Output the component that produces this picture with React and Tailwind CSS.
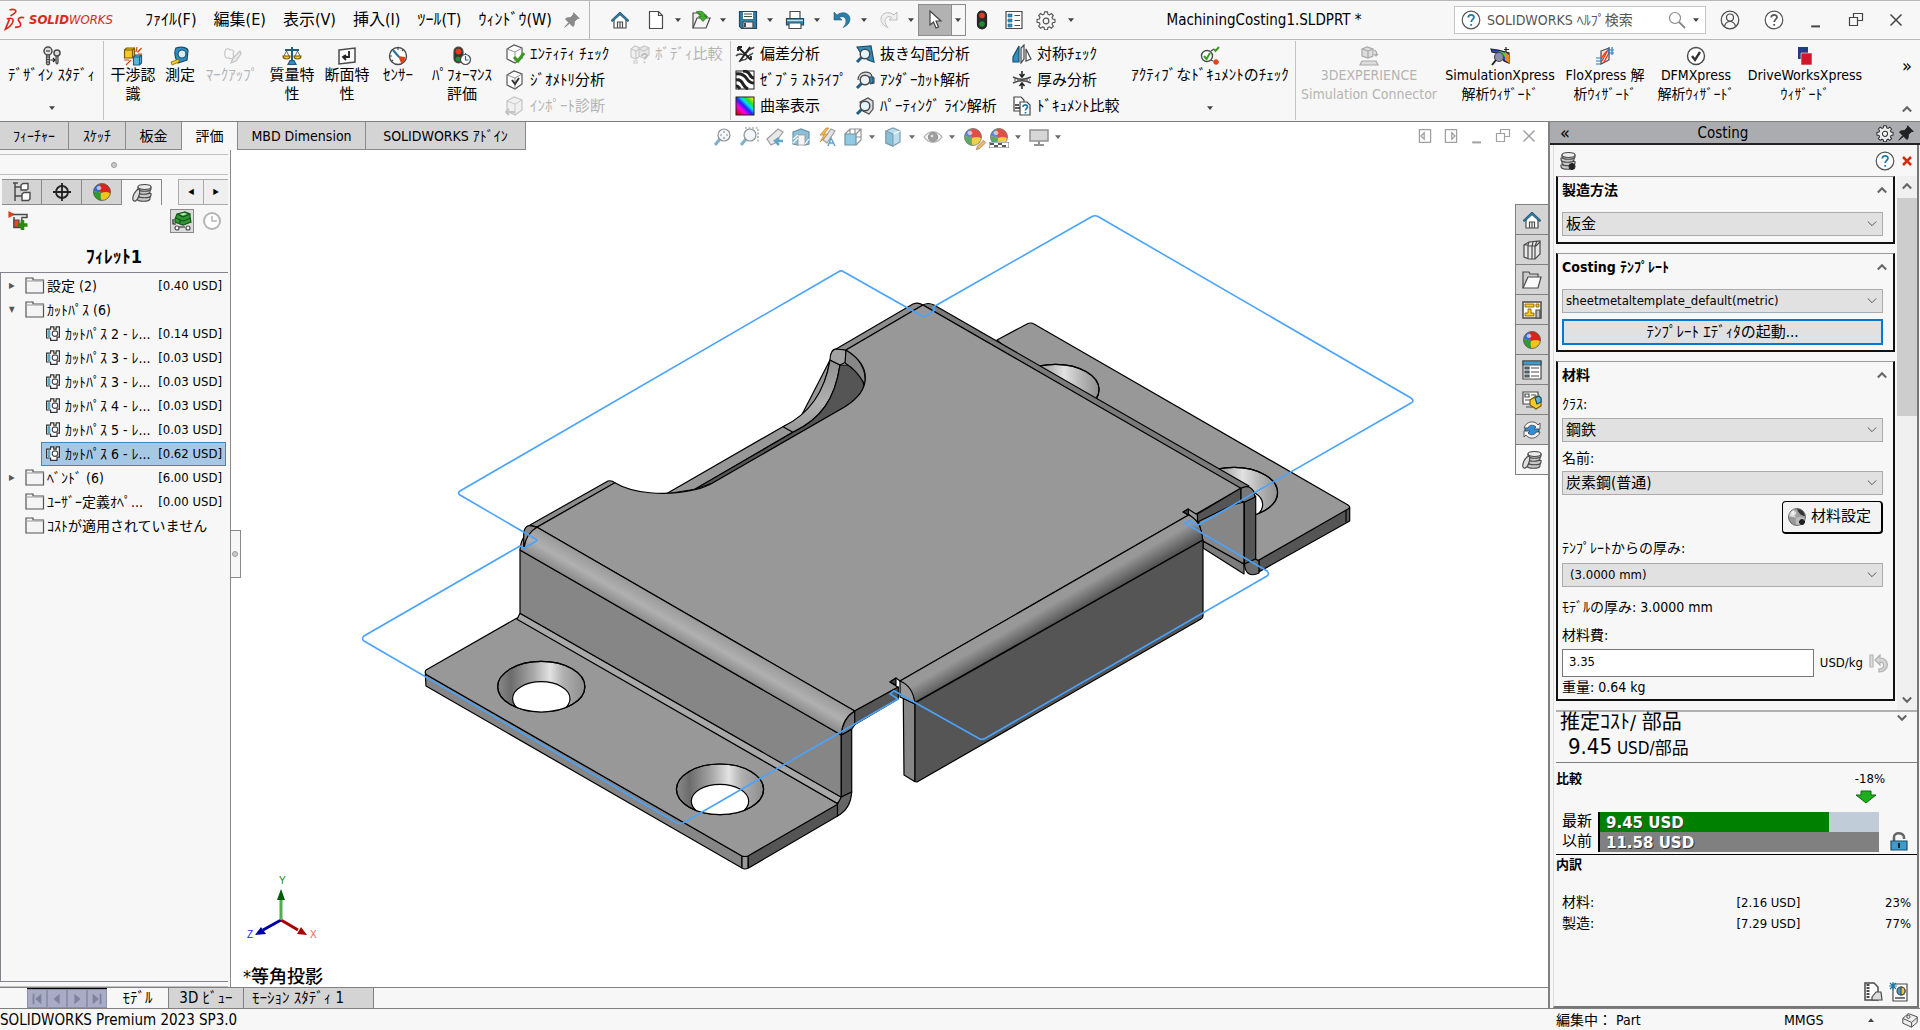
import { useState } from "react";

/* ---------------- ICONS ---------------- */
function Svg({ size = "size-5", children, vb = "0 0 20 20" }) {
  return (
    <svg viewBox={vb} className={`${size} shrink-0`} fill="none" stroke="#4a4a4a" strokeWidth="1.2" aria-hidden="true">
      {children}
    </svg>
  );
}

const Home = () => (
  <Svg>
    <path d="M4 9v9h12V9l-6-6z" fill="#fff" />
    <path d="M1 10.500 10 2l9 8.500-1.500 1L10 4.800 2.500 11.500z" fill="#2b7ea8" stroke="#1c4d66" strokeWidth=".8" />
    <path d="M7.500 18v-6h5v6M10 12v6" />
  </Svg>
);
const NewDoc = () => (
  <Svg><path d="M3.500 1.500h9l4 4v13h-13z" fill="#fff" /><path d="M12.500 1.500v4h4" /></Svg>
);
const OpenDoc = () => (
  <Svg>
    <path d="M2 18V3h5l1.500 2H15v3" fill="#eee" /><path d="M2 18 6 8h13l-4 10z" fill="#f5f5f5" />
    <path d="M5 2c5-2 9 0 9 4.500h2.500l-4.500 5-4.500-5H10C10 4.500 8 3 5 2z" fill="#3fae2a" stroke="#1f6b12" strokeWidth=".7" />
  </Svg>
);
const Save = () => (
  <Svg>
    <path d="M1.500 1.500h17v17h-15l-2-2z" fill="#2f7fa6" stroke="#1d4a60" />
    <path d="M5 2h10v7H5z" fill="#fff" stroke="none" /><path d="M6 4h8M6 6.500h8" />
    <path d="M5 12h10v6H5z" fill="#eee" /><path d="M7 13v4" strokeWidth="2" />
  </Svg>
);
const Print = () => (
  <Svg>
    <path d="M5 9V1.500h10V9z" fill="#fff" />
    <path d="M1.500 8.500h17V15h-17z" fill="#2f8fc0" stroke="#1d4a60" />
    <path d="M2 10.500h16" stroke="#bfe2f2" /><path d="M4 13h12v5.500H4z" fill="#fff" />
  </Svg>
);
const Undo = () => (
  <Svg><path d="M2 2v8h8L7.300 7.400C11 5.500 14 7.500 14 11c0 2.500-1 4.500-3 6.500 4-1.500 7-4.500 7-8.500C18 3 10.500.5 5 5z" fill="#2b7ea8" stroke="#1d5f80" strokeWidth=".6" /></Svg>
);
const Redo = () => (
  <Svg><path d="M18 2v8h-8l2.700-2.600C9 5.500 6 7.500 6 11c0 2.500 1 4.500 3 6.500C5 16 2 13 2 9 2 3 9.500.5 15 5z" fill="#f0f0f0" stroke="#bdbdbd" strokeWidth="1" /></Svg>
);
const Cursor = () => (
  <Svg><path d="M5 1v14l3.500-3 2.500 6 2.500-1-2.500-6H16z" fill="#fff" stroke="#444" /></Svg>
);
const Traffic = () => (
  <Svg><rect x="5.500" y="1" width="9" height="18" rx="4.500" fill="#2b2b2b" stroke="#222" /><circle cx="10" cy="5.500" r="2.800" fill="#e23b20" stroke="none" /><circle cx="10" cy="14" r="2.800" fill="#1f8a35" stroke="none" /></Svg>
);
const ListBox = () => (
  <Svg><path d="M2 1.500h16v17H2z" fill="#fff" /><path d="M4 4h4v3H4zM4 9h4v3H4zM4 14h4v3H4z" fill="#2f8fc0" stroke="#1d5f80" strokeWidth=".6" /><path d="M10.500 5.500H16M10.500 10.500H16M10.500 15.500H16" /></Svg>
);
const gearPath =
  "M8.500 1.500h3l.5 2.400 1.600.7 2-1.400 2.100 2.100-1.400 2 .7 1.600 2.400.5v3l-2.400.5-.7 1.600 1.400 2-2.100 2.100-2-1.400-1.600.7-.5 2.400h-3l-.5-2.400-1.600-.7-2 1.400-2.100-2.100 1.400-2-.7-1.600-2.400-.5v-3l2.400-.5.7-1.600-1.400-2 2.100-2.100 2 1.400 1.600-.7z";
const Gear = ({ size = "size-5", fill = "none", c = "#555" }) => (
  <Svg size={size} vb="-.5 -.5 21 21"><path d={gearPath} fill={fill} stroke={c} /><circle cx="10" cy="11" r="3" fill="#f7f7f7" stroke={c} /></Svg>
);
const Pin = ({ c = "#8a8a8a" }) => (
  <Svg size="size-4"><path d="M12 1l7 7-2.500.5L13 12l-.5 5-1.500 1-4-4-6 5 5-6-4-4 1-1.500L8 7l3.500-3.500z" fill={c} stroke={c} /></Svg>
);
const HelpIcon = ({ c = "#1f7aa5", size = "size-5" }) => (
  <svg viewBox="0 0 20 20" className={`${size} shrink-0`} fill="none" aria-hidden="true">
    <circle cx="10" cy="10" r="8.800" fill="#fff" stroke="#555" strokeWidth="1.200" />
    <path d="M7.300 7.500C7.300 4 13 4 13 7.300c0 2-2.800 2.200-2.800 4.700M10.200 14v1.800" stroke={c} strokeWidth="1.800" />
  </svg>
);
const Bolts = () => (
  <Svg>
    <path d="M4.500 8v10l1.500 1 1.500-1V8z" fill="#bbb" /><path d="M4.500 11h3M4.500 13.500h3M4.500 16h3" />
    <circle cx="6" cy="5" r="4" fill="#ddd" strokeWidth="1.500" /><path d="M4 5h4" />
    <path d="M14 9v8l1 1 1-1V9z" fill="#bbb" /><circle cx="15" cy="7" r="3" fill="#ddd" strokeWidth="1.500" />
    <path d="M8.500 14h4M11 12l2 2-2 2" stroke="#222" />
  </Svg>
);
const Interference = () => (
  <Svg>
    <path d="M1.500 4l2-2h8v8l-2 2h-8z" fill="#f6c928" stroke="#7a5b00" /><path d="M1.500 4h8v8M9.500 4l2-2" stroke="#7a5b00" />
    <path d="M10.500 11l2-2h6v8l-2 2h-6z" fill="#58b6e0" stroke="#1d5f80" /><path d="M10.500 11h6v8M16.500 11l2-2" stroke="#1d5f80" />
    <path d="M13 6l1-5M14.500 6.500l4-4.500M15 8h4M8 14l-5 5M6 14H1" stroke="#e2401b" />
  </Svg>
);
const Tape = () => (
  <Svg><path d="M6 2c7-2 12 0 12 3l-1 9-9 3C5 12 4 6 6 2z" fill="#2f8fc0" stroke="#1c4d66" /><circle cx="12" cy="8" r="4" fill="#d9edf5" stroke="#1c4d66" /><path d="M1 16l8-3v3l-7 3z" fill="#f6c928" stroke="#7a5b00" strokeWidth=".7" /></Svg>
);
const Markup = () => (
  <Svg><path d="M3 6c0-4 4-4 5-2 3-1 5 2 3 4 2 3-1 6-4 4-4 1-5-3-4-6z" stroke="#c8c8c8" /><path d="M18 5l-7 7-2 5 5-2 5-7z" fill="#e8e8e8" stroke="#c4c4c4" /></Svg>
);
const Scale = () => (
  <Svg>
    <path d="M10 1v15M3 4h14" stroke="#1d5f80" strokeWidth="2" /><path d="M6 18.500h8l-2-4H8z" fill="#2f8fc0" stroke="#1d5f80" />
    <path d="M1 10h7c0 4-7 4-7 0zM12 10h7c0 4-7 4-7 0z" fill="#f1c232" stroke="#7a5b00" /><path d="M4.500 5L2 10M4.500 5L7 10M15.500 5L13 10M15.500 5L18 10" strokeWidth=".8" />
  </Svg>
);
const Section = () => (
  <Svg><path d="M2 4l16-2v14L2 18z" fill="#fff" strokeWidth="1.500" /><path d="M12 5v6H7M9 9l-3 2 3 3" stroke="#222" strokeWidth="1.800" /></Svg>
);
const Gauge = () => (
  <Svg><circle cx="10" cy="10" r="8.500" fill="#fff" strokeWidth="1.400" /><path d="M10 10l7 1c0 4-2 6-4 6z" fill="#e2401b" stroke="none" /><path d="M5 4l6 7" stroke="#1f6f9a" strokeWidth="2" /><path d="M10 2v2M2 10h2M4 15l1-1M15 4l-1 1" /></Svg>
);
const Perf = () => (
  <Svg><rect x="2" y="1" width="9" height="16" rx="4.500" fill="#333" /><circle cx="6.500" cy="5.500" r="3" fill="#e23b20" stroke="none" /><circle cx="6" cy="13" r="2.500" fill="#1f8a35" stroke="none" /><circle cx="13.500" cy="13.500" r="5" fill="#fff" /><path d="M13.500 10v4h3M13.500 7v1.500" stroke="#1f6f9a" /></Svg>
);
const Cube = ({ check, dim }) => (
  <Svg>
    <path d="M2 5l7-4 8 3v10l-7 5-8-4z" fill={dim ? "#f0f0f0" : "#fff"} stroke={dim ? "#c4c4c4" : "#555"} />
    <path d="M2 5l8 3 7-4M10 8v11" stroke={dim ? "#c4c4c4" : "#888"} strokeWidth=".9" />
    {check === "green" && <path d="M9 13l4 4 6-8" stroke="#3a9a1d" strokeWidth="3" />}
    {check === "black" && <path d="M7 10l3 4 4-6" stroke="#333" strokeWidth="2" />}
    {dim && <path d="M1 16h9M4 13l-3 3 3 3" stroke="#c4c4c4" strokeWidth="2" />}
  </Svg>
);
const Deviation = () => (
  <Svg><path d="M1 12C5 7 8 14 12 8s5-2 7-5M4 18c2-4 6 0 8-4s4-3 6-5" strokeWidth="1.600" /><path d="M3 3l13 13M3 3v4M3 3h4M16 16v-4M15 3L5 17" stroke="#222" strokeWidth="1.800" /></Svg>
);
const Zebra = () => (
  <svg viewBox="0 0 20 20" className="size-5 shrink-0" aria-hidden="true">
    <rect x="1" y="1" width="18" height="18" fill="#fff" stroke="#222" />
    <path d="M1 4c6-1 9 2 11 5s4 4 7 4M1 10c4-1 6 2 7 4s3 4 5 5M8 1c3 0 6 2 7 4s2 3 4 3M1 16c2 0 3 1 4 3" stroke="#222" strokeWidth="3" fill="none" />
  </svg>
);
const Curvature = () => (
  <svg viewBox="0 0 20 20" className="size-5 shrink-0" aria-hidden="true">
    <defs>
      <linearGradient id="rainbow" x1="0" y1="1" x2="1" y2="0">
        <stop offset=".1" stopColor="#e00020" /><stop offset=".3" stopColor="#ff00e0" /><stop offset=".48" stopColor="#2020ff" />
        <stop offset=".62" stopColor="#00e0f0" /><stop offset=".75" stopColor="#20e020" /><stop offset=".95" stopColor="#fff000" />
      </linearGradient>
    </defs>
    <rect x="1" y="1" width="18" height="18" fill="url(#rainbow)" stroke="#222" />
  </svg>
);
const Lens = ({ mode }) => (
  <Svg>
    {mode === "draft" && <path d="M2 3l14-1 3 16-6-2-8-8z" fill="#2f8fc0" stroke="#1c4d66" />}
    {mode === "under" && <path d="M3 10c0-10 14-10 14-3l2 1v5l-4 1" fill="#ddd" />}
    {mode === "under" && <path d="M13 7h5v6h-5z" fill="#2f8fc0" stroke="#1c4d66" />}
    {mode === "part" && <path d="M5 6l8-4 5 3v8l-4 5-6-3z" fill="#ddd" />}
    <path d="M7 13l-5 5" stroke="#1f5f85" strokeWidth="3" /><circle cx="10" cy="10" r="4.800" fill="#e6f3f9" strokeWidth="1.500" />
  </Svg>
);
const Symmetry = () => (
  <Svg><path d="M1 18V13L7 2v16z" fill="#2f8fc0" stroke="#1c4d66" /><path d="M9 19V4l3-3v14z" fill="#eee" /><path d="M14 17V5l5 10z" fill="#fff" /></Svg>
);
const Thickness = () => (
  <Svg><path d="M1 7c6 3 12 3 18 0M1 13c6-3 12-3 18 0" strokeWidth="1.500" /><path d="M10 1v5M10 19v-5M7.500 4l2.500 3L12.500 4M7.500 16l2.500-3 2.500 3" stroke="#222" strokeWidth="1.500" /><path d="M2 10h16" strokeDasharray="2 1" /></Svg>
);
const DocCompare = () => (
  <Svg>
    <path d="M2 1h7l3 3v11H2z" fill="#fff" stroke="#444" /><path d="M8 6h7l3 3v10H8z" fill="#fff" stroke="#444" />
    <path d="M3 12h5M3 9h4" stroke="#222" strokeWidth="1.500" />
    <path d="M11 11c0-3 4.500-2.500 4.500 0 0 1.500-2 1.500-2 3.500M13.500 16v1.500" stroke="#1f7aa5" strokeWidth="1.700" />
  </Svg>
);
const BodyCompare = () => (
  <Svg>
    <path d="M1 5l4-3 5 2v8l-4 3-5-2z" fill="#f0f0f0" stroke="#c8c8c8" /><path d="M9 5l5-3 5 2v7l-5 3-5-2z" fill="#e8e8e8" stroke="#c8c8c8" />
    <path d="M1 5l5 2 4-3M6 7v8M9 5l5 2 5-3M3 17h5M3 19h5" stroke="#c8c8c8" />
    <path d="M12 12c0-3 5-2.500 5 0 0 1.500-2.500 1.500-2.500 3.500M14.500 17.500V19" stroke="#bcbcbc" strokeWidth="1.700" />
  </Svg>
);
const ActiveCheck = () => (
  <Svg><circle cx="7" cy="10" r="5.500" fill="#fff" strokeWidth="1.400" /><path d="M4 10l2.500 3L10 7" stroke="#3a9a1d" strokeWidth="2" /><path d="M14 3l1.500 2L19 1" stroke="#3a9a1d" strokeWidth="2" /><path d="M14 14l4 4M18 14l-4 4M16 13v6M13 16h6" stroke="#e2401b" strokeWidth="1.300" /><path d="M11 5l3-2M11 14l2 1" /></Svg>
);
const Sim3d = () => (
  <Svg><path d="M3 3l5-2 6 2v7l-5 2-6-2z" fill="#ddd" stroke="#aaa" /><path d="M3 3l6 2 5-2M9 5v7" stroke="#aaa" /><path d="M14 4c4 0 4 3 3 6M15 8l2 2 2-2M3 15h14l2 4H1z" fill="#ddd" stroke="#aaa" /></Svg>
);
const SimX = () => (
  <Svg><path d="M1 3l7 1 11 3v10l-5-2-3-7-9-2z" fill="#2747c9" stroke="#222" /><path d="M9 5l7 2v4l-5-1z" fill="#3fd13f" stroke="none" /><path d="M15 6l4 3v8l-4-3z" fill="#f08a1c" stroke="none" /><path d="M16 1v5M14 3.500h5" stroke="#222" /><circle cx="9" cy="11" r="4.500" fill="#8a8fa8" /><path d="M6 14l-4 5" stroke="#222" strokeWidth="2" /></Svg>
);
const FloX = () => (
  <Svg><path d="M6 5l8-3v12l-8 4z" fill="#f6dcd5" /><path d="M7 15l6-11M7 11l5-6M9 16l5-9" stroke="#e2401b" /><path d="M12 4h7M13 7h6M14 1v8M1 12h7M1 15h6M1 18h5M17 1v8" stroke="#1f7fc0" /></Svg>
);
const CheckRound = () => (
  <Svg><circle cx="10" cy="10" r="8.500" fill="#fff" strokeWidth="1.400" /><path d="M6 10l3 4 5-8" stroke="#333" strokeWidth="2.400" /></Svg>
);
const DriveW = () => (
  <svg viewBox="0 0 20 20" className="size-5 shrink-0" aria-hidden="true"><path d="M3 1h10v12H3z" fill="#253a80" /><path d="M6 7h11v12H6z" fill="#d4142c" stroke="#f7f7f7" strokeWidth=".6" /></svg>
);
const Ball = ({ gray }) => (
  <svg viewBox="0 0 20 20" className="size-5 shrink-0" aria-hidden="true">
    <circle cx="10" cy="10" r="8.500" fill={gray ? "#bdbdbd" : "#f0c419"} />
    <path d="M8 1.700q-2 4 1 9.300-4-2-7.500-1.500A8.500 8.500 0 0 1 8 1.700z" fill={gray ? "#dcdcdc" : "#3468d8"} />
    <path d="M8 1.700a8.500 8.500 0 0 1 10.400 9.500Q14 9 9 11 6 6 8 1.700z" fill={gray ? "#a0a0a0" : "#d9231c"} />
    {gray && <path d="M10 2c5 0 7 3 8 7-3 0-6-2-8-7z" fill="#333" />}
    <path d="M1.500 9.500Q5 9 9 11q-1 4 .5 7.500a8.500 8.500 0 0 1-8-9z" fill={gray ? "#999" : "#2f9a32"} />
    <circle cx="10" cy="10" r="8.500" fill="none" stroke="#555" strokeWidth=".8" />
    <ellipse cx="7" cy="6" rx="2.500" ry="2" fill="#fff" opacity=".6" />
    {gray && <path d="M15 12v6M12 15h6M13 13l4 4M17 13l-4 4" stroke="#222" strokeWidth="1.800" />}
  </svg>
);
const Coins = ({ gear }) => (
  <Svg>
    <g fill="#c9c9c9" strokeWidth="1.100">
      <path d="M5 14v2c1 3 12 3 13 0v-2z" /><path d="M6 10.500v2c1 3 12 3 13 0v-2z" /><path d="M5 7v2c1 3 12 3 13 0V7z" /><path d="M6 4v2c1 3 12 3 13 0V4z" />
      <ellipse cx="12.500" cy="4" rx="6.500" ry="2.500" fill="#ececec" />
    </g>
    {gear ? (
      <path d="M16 12v7M12.500 15.500h7M13.500 13l5 5M18.500 13l-5 5" stroke="#222" strokeWidth="2" />
    ) : (
      <path d="M7 6C3 7 0 14 1 17c1 2 4 1 5-2s3-6 1-9z" fill="#e0e0e0" />
    )}
  </Svg>
);
const Tree = () => (
  <Svg><path d="M3 1v18M1 1h5M3 5h7M3 14h7" strokeWidth="1.500" /><path d="M9 3l2-1.500h5V7l-1.500 1H9zM10 12l2-1.500h6V17l-1.500 1.500H10z" fill="#fff" strokeWidth="1.400" /></Svg>
);
const Target = () => (
  <Svg><circle cx="10" cy="10" r="6" strokeWidth="1.800" stroke="#222" /><path d="M10 1v18M1 10h18" stroke="#222" strokeWidth="1.800" /></Svg>
);
const Clock = () => (
  <Svg><circle cx="10" cy="10" r="8" stroke="#b5b5b5" strokeWidth="2" fill="#fff" /><path d="M10 5v5h5" stroke="#b5b5b5" strokeWidth="1.500" /></Svg>
);
const Cash = () => (
  <Svg>
    <path d="M5 3l8-2 5 2v3l1 5-8 3-8-3V8z" fill="#2f9a32" stroke="#14561a" /><path d="M5 3l6 3 7-3M4 7l7 3 8-3M8 9v3" stroke="#14561a" /><path d="M8 3l4-1 3 1-4 1.500z" fill="#bfe8c0" stroke="none" />
    <circle cx="5" cy="17" r="2" fill="#fff" /><circle cx="16" cy="17" r="2" fill="#fff" /><path d="M1 8v5h3M7 16h6" stroke="#222" />
  </Svg>
);
const Torch = () => (
  <Svg><path d="M1 1l5 2.500L1 6z" fill="#e2401b" stroke="#e2401b" /><path d="M5 3.500h14v3h-5l-1 10H6V6" fill="#eee" strokeWidth="1.500" /><path d="M6 9h5v7H6z" fill="#f04a22" /><path d="M14.500 9v10M9.500 14h10" stroke="#2b8a0c" strokeWidth="3.500" /></Svg>
);
const Folder = () => (
  <Svg><path d="M1 4V2h7v2h10.500v13H1z" fill="#f4f4f4" stroke="#555" /><path d="M1.500 5h17" stroke="#aaa" /></Svg>
);
const CutPath = () => (
  <Svg size="size-4"><path d="M2 4h5V1h4v3h3V1h4v13h-3v4H7v-3H2z" fill="#fff" stroke="#333" strokeWidth="1.500" /><circle cx="12.500" cy="9.500" r="3.500" strokeWidth="1.500" /><path d="M4 6h2v7H4z" stroke="#1f7aa5" /></Svg>
);
const Books = () => (
  <Svg><path d="M2 5l5-3 11-1v13l-5 5H7l-5-2z" fill="#e8e8e8" /><path d="M7 2L6 5v13M11 2l-1 4v13M15 1l-2 5v13M2 5h4M6 6h4M10 6h4l4-4" /></Svg>
);
const OpenFolder = () => (
  <Svg><path d="M1 18V2h6l1 2h8v4" fill="#ccc" /><path d="M1 18L6 7h13l-3 11z" fill="#fafafa" /></Svg>
);
const Palette = () => (
  <Svg><path d="M1 2h18v16H1z" fill="#fff" strokeWidth="1.500" /><path d="M3 4h9v3H3zM14 4h3v3h-3zM6 9h3v4h3v3H3v-3h3z" fill="#f6c928" stroke="#7a5b00" strokeWidth=".8" /><path d="M14 10h4v8h-4z" fill="#bbb" /></Svg>
);
const Props = () => (
  <Svg><path d="M1 1h18v18H1z" fill="#fff" /><path d="M1 1h18v4H1z" fill="#3d9ccc" /><path d="M3 7h4v2H3zM3 11h4v2H3zM3 15h4v2H3z" fill="#2f8fc0" /><path d="M9 8h8M9 12h8M9 16h8" /></Svg>
);
const Comments = () => (
  <Svg><path d="M1 2h15v12H1z" fill="#fff" /><path d="M3 4h4v3H3zM9 5h5M3 10h6M4 17h8" /><path d="M8 10l6-4 5 3v7l-5 3-6-4z" fill="#f6c928" stroke="#7a5b00" /><path d="M13 8l4-2 2 2v4l-4 2z" fill="#58b6e0" stroke="#1c4d66" /></Svg>
);
const Refresh = () => (
  <Svg><circle cx="10" cy="10" r="7" fill="#2f8fd8" stroke="#1c4d66" /><path d="M2 8c2-7 11-8 14-3l2-2v6h-6l2-2c-3-3-7-2-8 1zM18 12c-2 7-11 8-14 3l-2 2v-6h6l-2 2c3 3 7 2 8-1z" fill="#f5f5f5" strokeWidth=".9" /></Svg>
);
const Lock = () => (
  <Svg><path d="M5 9V5c0-5 9-5 10 0v2" strokeWidth="2.500" stroke="#666" /><path d="M2 9h16v9H2z" fill="#3d9ccc" stroke="#1c4d66" /><path d="M10 11v5" stroke="#123" strokeWidth="2" /></Svg>
);
const Report = () => (
  <Svg><path d="M4 2h14v17H4z" fill="#fff" /><circle cx="12" cy="9" r="4" fill="#3d9ccc" /><path d="M12 9V5a4 4 0 0 1 0 8z" fill="#f6c928" /><path d="M4 0v8M0 4h8M1 1l6 6M7 1L1 7" stroke="#1f7aa5" /><path d="M6 16h10" strokeWidth="1.500" /></Svg>
);
const ReportZip = () => (
  <Svg><path d="M2 1h9l4 4v13H2z" fill="#fff" strokeWidth="1.500" /><path d="M5 2v15" strokeDasharray="2 1" strokeWidth="3" /><path d="M9 15l4-5h5l1 8H9z" fill="#ddd" /></Svg>
);
const Revert = () => (
  <Svg><path d="M1 2h3v12H1z" fill="#ddd" stroke="#b5b5b5" /><path d="M6 7l5-5v3c10 0 10 14-1 14v-3c6 0 6-7 1-7v3z" fill="#d5d5d5" stroke="#b0b0b0" /></Svg>
);
const Tag = () => (
  <Svg size="size-4"><path d="M1 8l7-6 11 4v7l-7 6L1 14z" fill="#eee" /><path d="M1 8l11 5 7-6M12 13v6" /><circle cx="8" cy="6" r="2" /></Svg>
);

/* view toolbar */
const Magnify = ({ dashed }) => (
  <Svg><path d="M7 12l-5 6" stroke="#5f9dbd" strokeWidth="3" /><circle cx="11" cy="8" r="6" fill="#eef6fa" stroke="#777" />{dashed ? <path d="M6 1h13v14" stroke="#777" strokeDasharray="2 1.500" /> : <path d="M11 4v8M7 8h8" stroke="#777" strokeDasharray="2 4 2" />}</Svg>
);
const Previous = () => (
  <Svg><path d="M2 12L13 2l5 3-8 11-4 2z" fill="#e3e3e3" stroke="#888" /><path d="M18 14h-6M14 11l-4 3 4 4" stroke="#3d8fb8" strokeWidth="2.500" /></Svg>
);
const SectionView = () => (
  <Svg><path d="M2 5l8-3 8 3v12l-4 1V8H7v10l-5-1z" fill="#6cb2d3" stroke="#47798f" /><path d="M7 8h7v10H7z" fill="#f5f5f5" stroke="#999" /><path d="M2 12l5-4M2 16l5-5M14 17l4-5" stroke="#fff" /></Svg>
);
const Dynamic = () => (
  <Svg><path d="M6 13L14 2l4 2-8 12z" fill="#ddd" stroke="#888" /><path d="M9 1L3 8h4l-4 7 8-8H7l5-6z" fill="#f5a623" stroke="#b0721a" strokeWidth=".8" /><path d="M11 19l3-8 4 8M12 16h5" stroke="#3d8fb8" strokeWidth="1.500" /></Svg>
);
const Orient = () => (
  <Svg><path d="M2 7h11v11H2z" fill="#76bedf" stroke="#47798f" /><path d="M2 7l5-5h11v11l-5 5M13 7l5-5M7 2v5M12 2v5M13 10h5" stroke="#777" /></Svg>
);
const Display = () => (
  <Svg><path d="M3 4l7-3 7 3v11l-7 4-7-3z" fill="#a9d7ea" stroke="#5c8598" /><path d="M3 4l7 3 7-3M10 7v12" stroke="#fff" /><path d="M3 4l7 3v12l-7-3z" fill="#6cb2d3" stroke="#5c8598" /></Svg>
);
const Eye = () => (
  <Svg><path d="M1 10c5-7 13-7 18 0-5 7-13 7-18 0z" fill="#eee" stroke="#999" /><circle cx="10" cy="10" r="4.500" fill="#888" stroke="#777" /><circle cx="9" cy="9" r="1.300" fill="#ddd" stroke="none" /></Svg>
);
const Monitor = () => (
  <Svg><path d="M1 3h18v11H1z" fill="#ccc" stroke="#777" strokeWidth="1.500" /><path d="M10 14v4M5 18h10" stroke="#777" strokeWidth="2" /></Svg>
);
const BallEdit = () => (
  <span className="relative inline-flex"><Ball /><svg viewBox="0 0 20 20" className="absolute -right-1 -bottom-1 size-3"><path d="M2 18l2-6L14 2l4 4L8 16z" fill="#e8a33a" stroke="#555" /></svg></span>
);
const Scene = () => (
  <span className="relative inline-flex"><Ball /><svg viewBox="0 0 20 6" className="absolute inset-x-0 -bottom-px"><path d="M0 0h20v6H0z" fill="#fff" stroke="#444" /><path d="M1 1h4v2H1zM9 1h4v2H9zM5 3h4v2H5zM13 3h4v2h-4z" fill="#333" /></svg></span>
);

function Caret() {
  return <svg viewBox="0 0 8 5" className="h-1 w-1.5 shrink-0" aria-hidden="true"><path d="M0 0h8L4 5z" fill="#444" /></svg>;
}
function Chevron({ up }) {
  return (
    <svg viewBox="0 0 12 8" className="h-2 w-2.5 shrink-0" fill="none" stroke="#666" strokeWidth="2.500" aria-hidden="true">
      <path d={up ? "M1 7l5-5 5 5" : "M1 1l5 5 5-5"} />
    </svg>
  );
}
function Minimize({ c = "#444" }) {
  return <Svg size="size-4"><path d="M4 18h11" stroke={c} strokeWidth="2.500" /></Svg>;
}
function Restore({ c = "#444" }) {
  return <Svg size="size-4" vb="0 0 16 16"><path d="M5.500 5V1.500h9v7H10" stroke={c} /><path d="M1.500 5.500h8v8h-8z" stroke={c} /></Svg>;
}
function Close({ c = "#444" }) {
  return <Svg size="size-4" vb="0 0 16 16"><path d="M2.500 2.500l11 11M13.500 2.500l-11 11" stroke={c} strokeWidth="1.500" /></Svg>;
}

/* ---------------- TITLE BAR ---------------- */
const menus = ["ﾌｧｲﾙ(F)", "編集(E)", "表示(V)", "挿入(I)", "ﾂｰﾙ(T)", "ｳｨﾝﾄﾞｳ(W)"];
const quick = [
  ["新規", NewDoc], ["開く", OpenDoc], ["保存", Save], ["印刷", Print], ["元に戻す", Undo], ["やり直し", Redo],
];

function TitleBar() {
  return (
    <header className="flex h-10 shrink-0 items-center border-t border-b border-t-[#b8b8b8] border-b-[#b8b8b8]">
      <div className="flex w-[141px] items-center gap-[3px] pl-1 text-[#da291c]">
        <svg viewBox="0 0 24 26" className="h-6 w-[22px]" fill="none" stroke="#da291c" strokeWidth="1.800" aria-hidden="true">
          <path d="M6 2c5-1.500 8 0 6.500 2.500C11.500 6.500 9 7.500 7 8.500M3 12c5-2 8-.5 6.500 3.500C8 19 5 21.500 1.500 23L6 12M22 10.500c-5-1-8 1-5.500 4s3 6.500-4.500 6.500" />
        </svg>
        <span className="text-[13px] italic"><b>SOLID</b>WORKS</span>
      </div>
      <nav className="flex gap-[9px] text-base">
        {menus.map((m) => <button key={m} className="px-1">{m}</button>)}
      </nav>
      <span className="ml-2"><Pin /></span>
      <div className="ml-[9px] h-full w-px bg-[#b8b8b8]" />
      <div className="ml-5 flex h-full items-center">
        <button aria-label="ホーム" className="mr-4"><Home /></button>
        {quick.map(([label, Icon], i) => (
          <div key={label} className={`flex items-center gap-[9px] ${i === 0 ? "w-[45px]" : "w-[47px]"}`}>
            <button aria-label={label}><Icon /></button>
            <Caret />
          </div>
        ))}
        <div className="-ml-2 flex h-8 border border-[#8c8c8c]">
          <button aria-label="選択" className="flex w-8 items-center justify-center bg-[#b2b2b2]"><Cursor /></button>
          <button aria-label="選択オプション" className="flex w-3.5 items-center justify-center border-l border-[#8c8c8c]"><Caret /></button>
        </div>
        <div className="ml-1.5 flex items-center gap-3">
          <button aria-label="再構築"><Traffic /></button>
          <button aria-label="プロパティ"><ListBox /></button>
          <button aria-label="オプション"><Gear /></button>
          <Caret />
        </div>
      </div>
      <h1 className="flex-1 text-center text-[15px]">MachiningCosting1.SLDPRT *</h1>
      <div className="flex h-7 w-[252px] items-center gap-1.5 border border-[#c4c4c4] bg-white px-1.5">
        <HelpIcon />
        <input aria-label="検索" placeholder="SOLIDWORKS ﾍﾙﾌﾟ検索" className="min-w-0 flex-1 text-sm outline-none placeholder:text-[#555]" />
        <Svg size="size-5"><circle cx="8" cy="8" r="5.500" stroke="#888" /><path d="M12 12l6 6" stroke="#888" strokeWidth="1.800" /></Svg>
        <Caret />
      </div>
      <div className="flex items-center gap-6 pr-4 pl-3.5">
        <button aria-label="ログイン"><Svg><circle cx="10" cy="10" r="8.800" /><circle cx="10" cy="7.500" r="3.500" /><path d="M4.500 16c2-6 9-6 11 0" /></Svg></button>
        <button aria-label="ヘルプ"><HelpIcon c="#555" /></button>
        <button aria-label="最小化"><Minimize /></button>
        <button aria-label="元のサイズ"><Restore /></button>
        <button aria-label="閉じる"><Close /></button>
      </div>
    </header>
  );
}

/* ---------------- RIBBON ---------------- */
function BigButton({ icon, lines, width, dim, more }) {
  return (
    <button className={`flex h-full flex-col items-center pt-1.5 leading-[19px] whitespace-nowrap ${width} ${dim ? "text-[#b4b4b4]" : ""}`}>
      {icon}
      {lines.map((l) => <span key={l}>{l}</span>)}
      {more && <span className="mt-auto pb-[11px]"><Caret /></span>}
    </button>
  );
}
function SmallColumn({ items, width }) {
  return (
    <div className={`flex flex-col ${width}`}>
      {items.map(([label, icon, dim]) => (
        <button key={label} className={`flex h-[26px] items-center gap-[5px] whitespace-nowrap ${dim ? "text-[#b4b4b4]" : ""}`}>
          {icon}
          {label}
        </button>
      ))}
    </div>
  );
}
const Divider = () => <div className="my-px w-px bg-[#c4c4c4]" />;

function Ribbon() {
  return (
    <div className="flex h-[82px] shrink-0 border-b border-[#808080] text-[15px]">
      <BigButton icon={<Bolts />} lines={["ﾃﾞｻﾞｲﾝ ｽﾀﾃﾞｨ"]} width="w-[103px]" more />
      <Divider />
      <div className="flex pl-1">
        <BigButton icon={<Interference />} lines={["干渉認", "識"]} width="w-[50px]" />
        <BigButton icon={<Tape />} lines={["測定"]} width="w-11" />
        <BigButton icon={<Markup />} lines={["ﾏｰｸｱｯﾌﾟ"]} width="w-[60px]" dim />
        <BigButton icon={<Scale />} lines={["質量特", "性"]} width="w-[60px]" />
        <BigButton icon={<Section />} lines={["断面特", "性"]} width="w-[50px]" />
        <BigButton icon={<Gauge />} lines={["ｾﾝｻｰ"]} width="w-[52px]" />
        <BigButton icon={<Perf />} lines={["ﾊﾟﾌｫｰﾏﾝｽ", "評価"]} width="w-[76px]" />
      </div>
      <div className="flex pt-px pl-[5px]">
        <SmallColumn width="w-[125px]" items={[["ｴﾝﾃｨﾃｨ ﾁｪｯｸ", <Cube check="green" />], ["ｼﾞｵﾒﾄﾘ分析", <Cube check="black" />], ["ｲﾝﾎﾟｰﾄ診断", <Cube dim />, true]]} />
        <SmallColumn width="w-[100px]" items={[["ﾎﾞﾃﾞｨ比較", <BodyCompare />, true]]} />
      </div>
      <Divider />
      <div className="flex pt-px pl-1">
        <SmallColumn width="w-[120px]" items={[["偏差分析", <Deviation />], ["ｾﾞﾌﾞﾗ ｽﾄﾗｲﾌﾟ", <Zebra />], ["曲率表示", <Curvature />]]} />
        <SmallColumn width="w-[157px]" items={[["抜き勾配分析", <Lens mode="draft" />], ["ｱﾝﾀﾞｰｶｯﾄ解析", <Lens mode="under" />], ["ﾊﾟｰﾃｨﾝｸﾞ ﾗｲﾝ解析", <Lens mode="part" />]]} />
        <SmallColumn width="w-[113px]" items={[["対称ﾁｪｯｸ", <Symmetry />], ["厚み分析", <Thickness />], ["ﾄﾞｷｭﾒﾝﾄ比較", <DocCompare />]]} />
      </div>
      <BigButton icon={<ActiveCheck />} lines={["ｱｸﾃｨﾌﾞなﾄﾞｷｭﾒﾝﾄのﾁｪｯｸ"]} width="w-[170px]" more />
      <Divider />
      <div className="flex text-sm">
        <BigButton icon={<Sim3d />} lines={["3DEXPERIENCE", "Simulation Connector"]} width="w-[146px]" dim />
        <BigButton icon={<SimX />} lines={["SimulationXpress", "解析ｳｨｻﾞｰﾄﾞ"]} width="w-[116px]" />
        <BigButton icon={<FloX />} lines={["FloXpress 解", "析ｳｨｻﾞｰﾄﾞ"]} width="w-[94px]" />
        <BigButton icon={<CheckRound />} lines={["DFMXpress", "解析ｳｨｻﾞｰﾄﾞ"]} width="w-[88px]" />
        <BigButton icon={<DriveW />} lines={["DriveWorksXpress", "ｳｨｻﾞｰﾄﾞ"]} width="w-[130px]" />
      </div>
      <div className="ml-auto flex flex-col items-center justify-between pt-3 pr-2 pb-1">
        <span className="text-lg">»</span>
        <button aria-label="リボンを閉じる" className="pb-1"><Chevron up /></button>
      </div>
    </div>
  );
}

/* ---------------- TABS + VIEW TOOLBAR ---------------- */
const ribbonTabs = [
  ["ﾌｨｰﾁｬｰ", "w-[69px]"], ["ｽｹｯﾁ", "w-[57px]"], ["板金", "w-14"], ["評価", "w-14"], ["MBD Dimension", "w-32"], ["SOLIDWORKS ｱﾄﾞｲﾝ", "w-40"],
];
const viewTools = [
  [Magnify], [() => <Magnify dashed />], [Previous], [SectionView], [Dynamic], [Orient, true], [Display, true], [Eye, true], [BallEdit], [Scene, true], [Monitor, true],
];

function TabRow({ active, onPick }) {
  return (
    <div className="flex h-7 shrink-0 bg-white text-sm">
      <div className="flex">
        {ribbonTabs.map(([label, w]) => (
          <button
            key={label}
            onClick={() => onPick(label)}
            className={`border-r border-[#8a8a8a] whitespace-nowrap ${w} ${label === active ? "bg-[#f7f7f7]" : "border-b bg-[#d4d4d4]"}`}
          >
            {label}
          </button>
        ))}
      </div>
      <div className="ml-[187px] flex items-center gap-1.5 pt-0.5 opacity-80">
        {viewTools.map(([Icon, menu], i) => (
          <button key={i} aria-label={`表示 ${i + 1}`} className="flex items-center gap-1.5">
            <Icon />
            {menu && <span className="pr-0.5"><Caret /></span>}
          </button>
        ))}
      </div>
      <div className="ml-auto flex items-center gap-2.5 pr-[11px]">
        <Svg size="size-4"><path d="M3 2h14v16H3zM9 6l-4 4 4 4z" stroke="#a0a0a0" strokeWidth="1.600" /></Svg>
        <Svg size="size-4"><path d="M3 2h14v16H3zM11 6l4 4-4 4z" stroke="#a0a0a0" strokeWidth="1.600" /></Svg>
        <Minimize c="#a0a0a0" /><Restore c="#a0a0a0" /><Close c="#a0a0a0" />
      </div>
    </div>
  );
}

/* ---------------- LEFT PANEL ---------------- */
const cutPaths = [
  ["ｶｯﾄﾊﾟｽ 2 - ﾚ...", "[0.14 USD]"],
  ["ｶｯﾄﾊﾟｽ 3 - ﾚ...", "[0.03 USD]"],
  ["ｶｯﾄﾊﾟｽ 3 - ﾚ...", "[0.03 USD]"],
  ["ｶｯﾄﾊﾟｽ 4 - ﾚ...", "[0.03 USD]"],
  ["ｶｯﾄﾊﾟｽ 5 - ﾚ...", "[0.03 USD]"],
  ["ｶｯﾄﾊﾟｽ 6 - ﾚ...", "[0.62 USD]"],
];

function FolderRow({ label, price, open }) {
  return (
    <li className="flex h-6 items-center gap-0.5 pr-1.5 pl-2">
      <span className="w-3.5 text-[8px] text-[#555]">{open === undefined ? "" : open ? "▼" : "▶"}</span>
      <Folder />
      <span className="flex-1 whitespace-nowrap">{label}</span>
      <span className="text-[13px]">{price}</span>
    </li>
  );
}

function LeftPanel() {
  const [picked, setPicked] = useState(5);
  return (
    <aside className="flex w-[231px] shrink-0 flex-col border-r border-[#8a8a8a] bg-[#f7f7f7] pr-0.5 text-sm">
      <div className="mt-1 flex h-[21px] items-center justify-center border-t border-b border-[#c0c0c0]">
        <span className="size-1.5 rounded-full border border-[#999] bg-[#ccc]" />
      </div>
      <div className="mt-1 flex h-[26px] pl-0.5">
        {[Tree, Target, Ball].map((Icon, i) => (
          <button key={i} aria-label={`マネージャー ${i + 1}`} className="flex w-10 items-center justify-center border border-l-0 border-[#8a8a8a] bg-[#d4d4d4]"><Icon /></button>
        ))}
        <button aria-label="Costing" className="flex w-10 items-center justify-center border-t border-r border-[#8a8a8a]"><Coins /></button>
        <div className="ml-auto flex text-[8px]">
          <button className="w-[26px] border border-[#aaa] bg-[#efefef]">◀</button>
          <button className="w-6 border border-x-0 border-[#aaa] bg-[#efefef]">▶</button>
        </div>
      </div>
      <div className="mt-1 flex h-6 items-center pr-1.5 pl-2">
        <button aria-label="追加"><Torch /></button>
        <button aria-label="コスト" className="ml-auto border border-[#888] bg-[#dcdcdc] p-px"><Cash /></button>
        <button aria-label="時間" className="ml-2"><Clock /></button>
      </div>
      <h2 className="pt-3 pb-[3px] text-center text-lg leading-6 font-bold">ﾌｨﾚｯﾄ1</h2>
      <ul className="flex-1 border-t border-b border-l border-[#83838f] pt-px">
        <FolderRow label="設定 (2)" price="[0.40 USD]" open={false} />
        <FolderRow label="ｶｯﾄﾊﾟｽ (6)" open />
        {cutPaths.map(([label, price], i) => (
          <li key={i} className="flex h-6 pr-0.5 pl-10">
            <button
              onClick={() => setPicked(i)}
              className={`flex flex-1 items-center gap-1 border px-[3px] whitespace-nowrap ${i === picked ? "border-[#3f87b8] bg-[#a6c8e4]" : "border-transparent"}`}
            >
              <CutPath />
              <span>{label}</span>
              <span className="ml-auto text-[13px]">{price}</span>
            </button>
          </li>
        ))}
        <FolderRow label="ﾍﾞﾝﾄﾞ (6)" price="[6.00 USD]" open={false} />
        <FolderRow label="ﾕｰｻﾞｰ定義ｵﾍﾟ..." price="[0.00 USD]" />
        <FolderRow label="ｺｽﾄが適用されていません" />
      </ul>
      <div className="h-[5px] border-b border-[#c0c0c0]" />
    </aside>
  );
}

/* ---------------- MODEL ---------------- */
function Hole({ cx, cy, id, ring = "url(#cone)" }) {
  return (
    <g>
      <clipPath id={id}><ellipse cx={cx} cy={cy} rx="43.600" ry="25.300" /></clipPath>
      <ellipse cx={cx} cy={cy} rx="43.600" ry="25.300" fill={ring} />
      <ellipse cx={cx} cy={cy + 12} rx="28.700" ry="17" fill="#fff" clipPath={`url(#${id})`} />
      <ellipse cx={cx} cy={cy} rx="43.600" ry="25.300" fill="none" />
    </g>
  );
}

function Model() {
  return (
    <svg viewBox="231 150 1317 837" className="absolute inset-0 size-full" aria-label="板金モデル" role="img">
      <defs>
        <linearGradient id="cone">
          <stop offset="0" stopColor="#8a8a8a" /><stop offset=".15" stopColor="#6c6c6c" /><stop offset=".4" stopColor="#a6a6a6" />
          <stop offset=".6" stopColor="#e2e2e2" /><stop offset=".75" stopColor="#b0b0b0" /><stop offset="1" stopColor="#8c8c8c" />
        </linearGradient>
        <linearGradient id="cone2">
          <stop offset=".3" stopColor="#909090" /><stop offset=".6" stopColor="#e2e2e2" /><stop offset=".8" stopColor="#b4b4b4" /><stop offset="1" stopColor="#909090" />
        </linearGradient>
        <linearGradient id="bendL" gradientUnits="userSpaceOnUse" x1="690" y1="615" x2="675" y2="641">
          <stop offset="0" stopColor="#989898" /><stop offset=".5" stopColor="#b0b0b0" /><stop offset="1" stopColor="#868686" />
        </linearGradient>
        <linearGradient id="bendF" gradientUnits="userSpaceOnUse" x1="1044" y1="598" x2="1058" y2="622">
          <stop offset="0" stopColor="#989898" /><stop offset=".35" stopColor="#989898" /><stop offset="1" stopColor="#555" />
        </linearGradient>
        <linearGradient id="wall" x1="0" y1="0" x2="0" y2="1">
          <stop offset="0" stopColor="#909090" /><stop offset=".6" stopColor="#b0b0b0" /><stop offset="1" stopColor="#989898" />
        </linearGradient>
      </defs>
      <g stroke="#000" strokeWidth="1.200" strokeLinejoin="round" fill="#989898">
        {/* rear mounting flange */}
        <path d="M1349.700 507v14l-91 51v-12z" fill="#555" />
        <path d="M997 340l30-16q4-2 7 0L1348 505q3 2 0 4l-89 51h-20z" />
        <Hole cx={1055.500} cy={389.600} id="h3" ring="url(#cone2)" />
        <Hole cx={1234} cy={492.600} id="h4" ring="url(#cone2)" />
        <path d="M1346 510v12" />
        <path d="M1203 541l41 23v10l-41-26z" fill="#7c7c7c" />
        <path d="M1197 514l47-12v62l-41-23z" fill="#868686" />
        <path d="M1244.400 502l11.300-6v64l-11.300 5z" fill="#555" />
        <path d="M1244.400 564l11-5 3.600 2v12c-8 4-14 1-14.600-9z" fill="#6c6c6c" />

        {/* base flange */}
        <path d="M425.300 674L742 856v12L426 686z" fill="#868686" />
        <path d="M747.600 856l90-52v12l-89 52z" fill="#555" />
        <path d="M742 856h6v12q-3 2-6 0z" fill="#999" />
        <path d="M517 618l-91 52q-2 3 1 5l315 181q3 1 6 0l90-52z" />
        <Hole cx={541.300} cy={686.700} id="h1" />
        <Hole cx={720} cy={789.300} id="h2" />

        {/* step wall */}
        <path d="M520 613.300l-3 6L836.700 803q4-1 4.600-6z" fill="#a8a8a8" />
        <path d="M520 550v63.300l321.300 184V735z" fill="#868686" />
        <path d="M841.300 735l10.400-6v63l-10.400 5.300z" fill="#555" />
        <path d="M841.300 797l10.400-5q-1 17-14.200 24v-12z" fill="#666" />

        {/* front flange */}
        <path d="M903.300 698l11.700 6v77.700l-11-6.700z" fill="#868686" />
        <path d="M915 703l288-163v76q0 2-2 3L917 782l-2-.5z" fill="#555" />

        {/* cutout inner faces */}
        <path d="M830 360c-5 31-20 56-47.200 66.700L666 494l30-5 97-57z" fill="#979797" />
        <path d="M830 360l10 5c-5 34-19 54-47 67.300l-10-5.600c27-13 42-36 47-66.700z" fill="url(#wall)" />
        <path d="M840 365c-5 34-19 54-47 67.300L695 489l18-6 132-76c20-13 25-22 10-42z" fill="#555" />
        <path d="M830 360c0-6 2-12 8-11l8 1v12l-6 3z" fill="#a2a2a2" />
        <path d="M846 350c13 7 21 20 19 35-7-12-12-17-20-22z" fill="#878787" />

        {/* top plate */}
        <path d="M836 349l77-45q5-2 10 1l-77 45z" fill="#8c8c8c" />
        <path d="M530 525l78-44q4-1 7 2l-78 44z" fill="#8c8c8c" />
        <path d="M923 305q5-3 11 0l315 181-8 3z" fill="#7a7a7a" />
        <path d="M537 527.300L614.800 482.700C632 493 664 497 696 489.300Q706 487 713 482.700L845 406.700C872 390 872 366 846 350L922.900 305 1240.900 488.300 1196 514l-8-5-5 3 5.600 3L900 681l-4-3-6 4 8 5.300L854.700 711z" />
        <path d="M1197.500 514l43.500-26v13l-43.500 21z" fill="#555" />
        <path d="M1241 488.300c7-4 14 0 13.700 9l-10.300 5-3.400-1.700z" fill="#777" />
        <path d="M1183.400 512l5-3v6zM890 682l6-4v7z" fill="#444" />
        <path d="M854.700 711l43.600-24v12l-46 27z" fill="#555" />

        {/* bends */}
        <path d="M537 527.300L854.700 711q-12 7-13.400 24L520 550q1-17 17-22.700z" fill="url(#bendL)" />
        <path d="M523.700 548v-16q2-8 8-6l5.300 1.300q-11 6-13 20.700z" fill="#888" />
        <path d="M841.300 735q1-16 13.400-24v14l-3 4z" fill="#777" />
        <path d="M900 681L1188.600 515q13 6 14 25L914 703z" fill="url(#bendF)" />
        <path d="M900 681q13 5 15 23l-15-7z" fill="#9a9a9a" />
      </g>
      <path
        d="M844 272L920 315q3 3 7 0l8-5-2-2 2-2L1092 216.500q3-1.500 6 0L1411 398q4 3 0 5L1197.700 525.300l-8.700-4.600-4 2.600L1267 571q3 3 0 5L985 738.500q-3 1.500-6 0L894 690.700l-4 3.300 8 5L683 823q-3 1-6 0L364 641q-3-2 0-5L520 546l3.700 2.300 12.300-7q2-1 0-2L460 495q-3-2 0-4L839 271.500q2-1.500 5 .5z"
        fill="none" stroke="#4aa3ff" strokeWidth="1.600"
      />
      {/* triad */}
      <g strokeWidth="3">
        <path d="M281 920l-18 10" stroke="#0000a8" /><path d="M255 935l6-8 5 7z" fill="#0000a8" />
        <path d="M281 920l17 10" stroke="#a80000" /><path d="M307 935l-10-1 4-7z" fill="#a80000" />
        <path d="M281 920v-22" stroke="#4fae52" /><path d="M281 889l-4 11h8z" fill="#005c00" />
      </g>
      <g fontFamily="Liberation Sans" fontSize="10">
        <text x="279" y="884" fill="#148a1a">Y</text><text x="310" y="938" fill="#ff5a5a">X</text><text x="247" y="938" fill="#2a2af0">Z</text>
      </g>
    </svg>
  );
}

const paneTabs = [Home, Books, OpenFolder, Palette, Ball, Props, Comments, Refresh, Coins];

function Viewport() {
  return (
    <main className="relative flex-1 overflow-hidden bg-white">
      <Model />
      <button aria-label="パネルを折りたたむ" className="absolute -left-px top-[380px] flex h-12 w-[11px] items-center justify-center border border-l-0 border-[#8a8a8a] bg-[#f7f7f7]">
        <span className="size-1.5 rounded-full border border-[#999] bg-[#ccc]" />
      </button>
      <div className="absolute top-[54px] right-0 flex w-[33px] flex-col border-t border-l border-[#808080]">
        {paneTabs.map((Icon, i) => (
          <button key={i} aria-label={`タスク パネル ${i + 1}`} className={`flex h-[30px] items-center justify-center border-b border-[#808080] ${i === 8 ? "bg-[#f7f7f7]" : "bg-[#d4d4d4]"}`}>
            <Icon />
          </button>
        ))}
      </div>
      <p className="absolute bottom-0 left-3 text-lg leading-5 font-medium">*等角投影</p>
    </main>
  );
}

function BottomTabs() {
  return (
    <div className="flex h-[21px] shrink-0 border-t border-[#808080] bg-[#f7f7f7] pl-[27px] text-[15px] leading-[18px]">
      <div className="flex border-t border-black">
        {["M3 2v12h2V2zM13 2L6 8l7 6z", "M11 2L4 8l7 6z", "M5 2l7 6-7 6z", "M11 2v12h2V2zM3 2l7 6-7 6z"].map((d, i) => (
          <button key={i} aria-label={`タブ送り ${i + 1}`} className="flex w-5 items-center justify-center border border-[#8e91ae] bg-[#a9acc4]">
            <svg viewBox="0 0 16 16" className="size-3.5" aria-hidden="true"><path d={d} fill="#7f829f" /></svg>
          </button>
        ))}
      </div>
      <button className="w-[62px] border-r border-[#808080]">ﾓﾃﾞﾙ</button>
      <button className="w-[75px] border-r border-[#808080] bg-[#d4d4d4]">3D ﾋﾞｭｰ</button>
      <button className="w-[130px] border-r border-[#808080] bg-[#d4d4d4] pl-2 text-left whitespace-nowrap">ﾓｰｼｮﾝ ｽﾀﾃﾞｨ 1</button>
    </div>
  );
}

/* ---------------- COSTING PANEL ---------------- */
function Group({ title, children }) {
  return (
    <section className="mb-[9px] border-2 border-t border-[#111] border-t-[#999] px-1 pb-1">
      <div className="flex h-[26px] items-center justify-between pr-0.5">
        <h3 className="text-sm font-bold">{title}</h3>
        <Chevron up />
      </div>
      {children}
    </section>
  );
}
function Combo({ id, value, label, look = "text-[15px] px-[3px]" }) {
  return (
    <div className="relative mr-1.5">
      <select id={id} aria-label={label} className={`block h-6 w-full appearance-none border border-[#ababab] bg-[#e1e1e1] leading-5 ${look}`}>
        <option>{value}</option>
      </select>
      <span className="pointer-events-none absolute top-2 right-1.5 flex">
        <svg viewBox="0 0 12 8" className="h-2 w-2.5" fill="none" stroke="#555" strokeWidth="1.200"><path d="M1 1l5 5 5-5" /></svg>
      </span>
    </div>
  );
}

function Bar({ label, value, pct, color }) {
  return (
    <div className="flex h-5 items-center">
      <span className="w-9 text-[15px]">{label}</span>
      <div className="h-5 flex-1 border-l-2 border-black bg-[#c0ccd8]">
        <div className={`h-5 pl-1.5 font-['DejaVu_Sans',sans-serif] text-[15px] leading-[22px] font-bold text-white text-shadow-[1px_1px_0_#333] ${color}`} style={{ width: `${pct}%` }}>{value}</div>
      </div>
    </div>
  );
}

function CostingPanel() {
  return (
    <aside className="flex w-[372px] shrink-0 flex-col border-l-2 border-[#808080] bg-[#f7f7f7] text-sm">
      <div className="flex h-[23px] shrink-0 items-center border-b-2 border-[#222] bg-[#abacb0] px-1.5">
        <span className="pl-1 text-lg leading-4">«</span>
        <h2 className="flex-1 text-center text-[15px] leading-5">Costing</h2>
        <Gear size="size-[18px]" fill="#eee" c="#333" />
        <span className="ml-1"><Pin c="#222" /></span>
      </div>
      <div className="mr-px ml-[3px] flex flex-1 flex-col border-r-2 border-b-2 border-l border-[#777] border-l-[#ddd] pl-0.5">
        <div className="flex h-[31px] shrink-0 items-center pr-1">
          <Coins gear />
          <span className="ml-auto"><HelpIcon /></span>
          <button aria-label="閉じる" className="ml-1.5">
            <svg viewBox="0 0 12 12" className="size-3" stroke="#dc2a0c" strokeWidth="2.500"><path d="M2 2l8 8M10 2l-8 8" /></svg>
          </button>
        </div>
        <div className="flex">
          <div className="flex-1">
            <Group title="製造方法">
              <div className="mt-[9px] mb-0.5"><Combo label="製造方法" value="板金" /></div>
            </Group>
            <Group title="Costing ﾃﾝﾌﾟﾚｰﾄ">
              <div className="mt-[9px]"><Combo label="Costing テンプレート" value="sheetmetaltemplate_default(metric)" look="text-[13px] px-[3px]" /></div>
              <button className="mt-1.5 mr-1.5 mb-px block h-[26px] w-[calc(100%-6px)] border-2 border-[#0078d7] bg-[#e1e1e1] text-[15px] leading-5">ﾃﾝﾌﾟﾚｰﾄ ｴﾃﾞｨﾀの起動...</button>
            </Group>
            <Group title="材料">
              <label htmlFor="cls" className="mt-1.5 mb-1 block">ｸﾗｽ:</label>
              <Combo id="cls" value="鋼鉄" />
              <label htmlFor="name" className="mt-1.5 mb-[3px] block">名前:</label>
              <Combo id="name" value="炭素鋼(普通)" />
              <button className="mt-1.5 mr-1.5 ml-auto flex h-[33px] items-center gap-1 rounded-sm border border-r-2 border-b-2 border-black bg-[#f3f3f3] pr-2.5 pl-1 text-[15px]"><Ball gray />材料設定</button>
              <label htmlFor="thick" className="mt-1 mb-[5px] block">ﾃﾝﾌﾟﾚｰﾄからの厚み:</label>
              <Combo id="thick" value="(3.0000 mm)" look="text-[13px] px-[7px]" />
              <p className="mt-2.5">ﾓﾃﾞﾙの厚み: 3.0000 mm</p>
              <label htmlFor="cost" className="mt-2 mb-1 block">材料費:</label>
              <div className="flex items-center">
                <input id="cost" defaultValue="3.35" className="h-7 min-w-0 flex-1 border border-[#777] bg-white px-1.5 pb-1 text-[13px]" />
                <span className="px-1.5 text-[13px]">USD/kg</span>
                <button aria-label="元に戻す"><Revert /></button>
              </div>
              <p className="-mb-0.5">重量: 0.64 kg</p>
            </Group>
          </div>
          <div className="ml-0.5 flex w-5 flex-col items-center bg-[#f0f0f0] py-1.5">
            <Chevron up />
            <div className="mt-2 h-[218px] w-full bg-[#cdcdcd]" />
            <span className="mt-auto"><Chevron /></span>
          </div>
        </div>

        <section className="border-t-2 border-b border-t-[#b0b0b0] border-b-[#808080] pl-1">
          <div className="flex items-start justify-between pr-2.5">
            <h3 className="text-xl leading-5">推定ｺｽﾄ/ 部品</h3>
            <span className="pt-0.5"><Chevron /></span>
          </div>
          <p className="pt-px pl-2 text-[17px] leading-7"><span className="text-[22px]">9.45</span> USD/部品</p>
        </section>

        <section className="border-b border-black pb-0.5">
          <div className="flex pt-1.5 pr-8 text-[13px] leading-5 font-bold">
            <h3>比較</h3>
            <div className="ml-auto flex flex-col items-start">
              <span className="font-medium">-18%</span>
              <svg viewBox="0 0 22 14" className="mt-px h-3.5 w-[22px]"><path d="M6 1h10v4h5l-10 8L1 5h5z" fill="#1fae1f" stroke="#0c6b0c" /></svg>
            </div>
          </div>
          <div className="mt-2 flex items-end gap-2.5 pr-2 pl-1.5">
            <div className="flex-1">
              <Bar label="最新" value="9.45 USD" pct={82} color="bg-[#008000]" />
              <Bar label="以前" value="11.58 USD" pct={100} color="bg-[#808080]" />
            </div>
            <button aria-label="ロック"><Lock /></button>
          </div>
        </section>

        <section>
          <h3 className="text-[13px] leading-5 font-bold">内訳</h3>
          <table className="mt-[17px] ml-1.5 w-[calc(100%-12px)] leading-[21px]">
            <tbody>
              <tr><th className="text-left font-normal">材料:</th><td className="text-[13px]">[2.16 USD]</td><td className="text-right text-[13px]">23%</td></tr>
              <tr><th className="w-1/2 text-left font-normal">製造:</th><td className="text-[13px]">[7.29 USD]</td><td className="text-right text-[13px]">77%</td></tr>
            </tbody>
          </table>
        </section>
        <div className="mt-auto flex justify-end gap-1.5 pr-2 pb-1">
          <button aria-label="レポート"><ReportZip /></button>
          <button aria-label="新規レポート"><Report /></button>
        </div>
      </div>
    </aside>
  );
}

/* ---------------- APP ---------------- */
function App() {
  const [tab, setTab] = useState("評価");

  return (
    <div className="flex h-screen flex-col overflow-hidden bg-[#f7f7f7] font-['DejaVu_Sans_Condensed','Noto_Sans_CJK_JP',sans-serif] text-black">
      <TitleBar />
      <Ribbon />
      <div className="flex min-h-0 flex-1">
        <div className="flex min-w-0 flex-1 flex-col">
          <TabRow active={tab} onPick={setTab} />
          <div className="flex min-h-0 flex-1">
            <LeftPanel />
            <Viewport />
          </div>
          <BottomTabs />
        </div>
        <CostingPanel />
      </div>
      <footer className="flex h-[22px] shrink-0 items-end border-t border-[#808080] pr-0.5 text-[15px] leading-[19px]">
        <span>SOLIDWORKS Premium 2023 SP3.0</span>
        <span className="ml-auto w-[228px] text-sm leading-[19px]">編集中： Part</span>
        <span className="w-[84px] text-sm leading-[19px]">MMGS</span>
        <svg viewBox="0 0 8 5" className="mr-7 mb-2 h-1 w-1.5"><path d="M0 5h8L4 0z" fill="#444" /></svg>
        <span className="pb-0.5"><Tag /></span>
      </footer>
    </div>
  );
}

export default App;
